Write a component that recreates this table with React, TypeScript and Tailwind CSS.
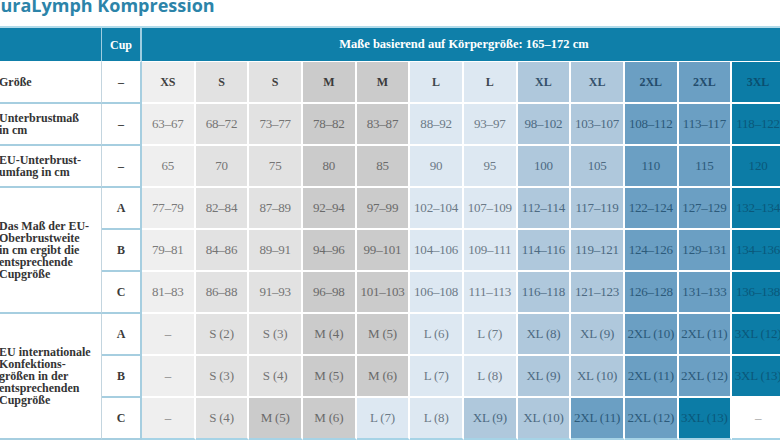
const COLS = ['XS', 'S', 'S', 'M', 'M', 'L', 'L', 'XL', 'XL', '2XL', '2XL', '3XL'];

const CELL_BG: Record<string, string> = {
  XS: 'bg-[#efefef]',
  S: 'bg-[#e2e2e2]',
  M: 'bg-[#cbcbcb]',
  L: 'bg-[#dde8f2]',
  XL: 'bg-[#afc8dc]',
  '2XL': 'bg-[#6b9fc3]',
  '3XL': 'bg-[#0c7ca6]',
  none: 'bg-white',
};

const CELL_TEXT: Record<string, string> = {
  XS: 'text-[#7a7a7a]',
  S: 'text-[#747474]',
  M: 'text-[#6a6a6a]',
  L: 'text-[#6c7a87]',
  XL: 'text-[#4d6a82]',
  '2XL': 'text-[#2c5a7a]',
  '3XL': 'text-[#0a587a]',
  none: 'text-[#9a9a9a]',
};

const BOLD_TEXT: Record<string, string> = {
  XS: 'text-[#404040]',
  S: 'text-[#404040]',
  M: 'text-[#3a3a3a]',
  L: 'text-[#3e4850]',
  XL: 'text-[#34506a]',
  '2XL': 'text-[#234c6c]',
  '3XL': 'text-[#0a4f70]',
  none: 'text-[#404040]',
};

type Row = { cup: string; values: string[]; sizes?: string[]; bold?: boolean };

const blockA: Row[] = [
  { cup: '–', bold: true, values: COLS },
  { cup: '–', values: ['63–67', '68–72', '73–77', '78–82', '83–87', '88–92', '93–97', '98–102', '103–107', '108–112', '113–117', '118–122'] },
  { cup: '–', values: ['65', '70', '75', '80', '85', '90', '95', '100', '105', '110', '115', '120'] },
];

const blockB: Row[] = [
  { cup: 'A', values: ['77–79', '82–84', '87–89', '92–94', '97–99', '102–104', '107–109', '112–114', '117–119', '122–124', '127–129', '132–134'] },
  { cup: 'B', values: ['79–81', '84–86', '89–91', '94–96', '99–101', '104–106', '109–111', '114–116', '119–121', '124–126', '129–131', '134–136'] },
  { cup: 'C', values: ['81–83', '86–88', '91–93', '96–98', '101–103', '106–108', '111–113', '116–118', '121–123', '126–128', '131–133', '136–138'] },
];

const blockC: Row[] = [
  { cup: 'A', values: ['–', 'S (2)', 'S (3)', 'M (4)', 'M (5)', 'L (6)', 'L (7)', 'XL (8)', 'XL (9)', '2XL (10)', '2XL (11)', '3XL (12)'] },
  { cup: 'B', values: ['–', 'S (3)', 'S (4)', 'M (5)', 'M (6)', 'L (7)', 'L (8)', 'XL (9)', 'XL (10)', '2XL (11)', '2XL (12)', '3XL (13)'] },
  {
    cup: 'C',
    values: ['–', 'S (4)', 'M (5)', 'M (6)', 'L (7)', 'L (8)', 'XL (9)', 'XL (10)', '2XL (11)', '2XL (12)', '3XL (13)', '–'],
    sizes: ['XS', 'S', 'M', 'M', 'L', 'L', 'XL', 'XL', '2XL', '2XL', '3XL', 'none'],
  },
];

const labelCls =
  "flex items-center pl-[9px] pr-1 border-r border-b-2 border-r-[#c3d5df] border-b-[#a6cee0] text-[12px] leading-[12px] font-bold text-[#343434] font-['Liberation_Serif',serif]";

function DataRow({ row, last }: { row: Row; last?: boolean }) {
  return (
    <>
      <div className="flex items-center justify-center border-r-2 border-b-2 border-r-[#a6cee0] border-b-[#a6cee0] font-['Liberation_Serif',serif] font-bold text-[12px] text-[#3a3a3a]">
        {row.cup}
      </div>
      {row.values.map((v, i) => {
        const size = row.sizes ? row.sizes[i] : COLS[i];
        return (
          <div
            key={i}
            className={`flex items-center justify-center border-r-2 border-b-2 border-r-white ${
              last ? 'border-b-[#a6d3e6]' : 'border-b-white'
            } ${CELL_BG[size]} ${row.bold ? BOLD_TEXT[size] : CELL_TEXT[size]} font-['Liberation_Serif',serif] whitespace-nowrap ${
              row.bold ? 'font-bold text-[12px]' : 'text-[13px] tracking-[-0.2px]'
            }`}
          >
            {v}
          </div>
        );
      })}
    </>
  );
}

export default function App() {
  return (
    <div className="w-[780px] h-[440px] overflow-hidden bg-white">
      {/* Title */}
      <div className="h-[26px] ml-[-11px] overflow-hidden">
        <h1 className="mt-[-6px] text-[18px] leading-[22px] font-bold text-[#2c84a9] font-['Open_Sans',sans-serif] whitespace-nowrap">
          CuraLymph Kompression
        </h1>
      </div>
      <div className="h-[2px] bg-[#b2dbea]" />

      {/* Table */}
      <div className="ml-[-10px] w-[796px] grid grid-cols-[112px_40px_repeat(12,53.67px)] grid-rows-[34px_repeat(9,42px)]">
        {/* Header */}
        <div className="bg-[#0f7fa9] border-r border-r-[#9fcde0] border-b border-b-white" />
        <div className="bg-[#0f7fa9] border-r-2 border-r-[#9fcde0] border-b border-b-white flex items-center justify-center text-white font-bold text-[12px] font-['Liberation_Serif',serif]">
          Cup
        </div>
        <div className="col-span-12 bg-[#0f7fa9] border-b border-b-white flex items-center justify-center text-white font-bold text-[12.5px] font-['Liberation_Serif',serif]">
          Maße basierend auf Körpergröße: 165–172 cm
        </div>

        {/* Größe */}
        <div className={labelCls}>Größe</div>
        <DataRow row={blockA[0]} />
        <div className={labelCls}>
          Unterbrustmaß
          <br />
          in cm
        </div>
        <DataRow row={blockA[1]} />
        <div className={labelCls}>
          EU-Unterbrust-
          <br />
          umfang in cm
        </div>
        <DataRow row={blockA[2]} />

        {/* Cup group */}
        <div className={`${labelCls} row-span-3`}>
          Das Maß der EU-
          <br />
          Oberbrustweite
          <br />
          in cm ergibt die
          <br />
          entsprechende
          <br />
          Cupgröße
        </div>
        <DataRow row={blockB[0]} />
        <DataRow row={blockB[1]} />
        <DataRow row={blockB[2]} />

        {/* Konfektion */}
        <div className={`${labelCls} row-span-3`}>
          EU internationale
          <br />
          Konfektions-
          <br />
          größen in der
          <br />
          entsprechenden
          <br />
          Cupgröße
        </div>
        <DataRow row={blockC[0]} />
        <DataRow row={blockC[1]} />
        <DataRow row={blockC[2]} last />
      </div>
    </div>
  );
}
